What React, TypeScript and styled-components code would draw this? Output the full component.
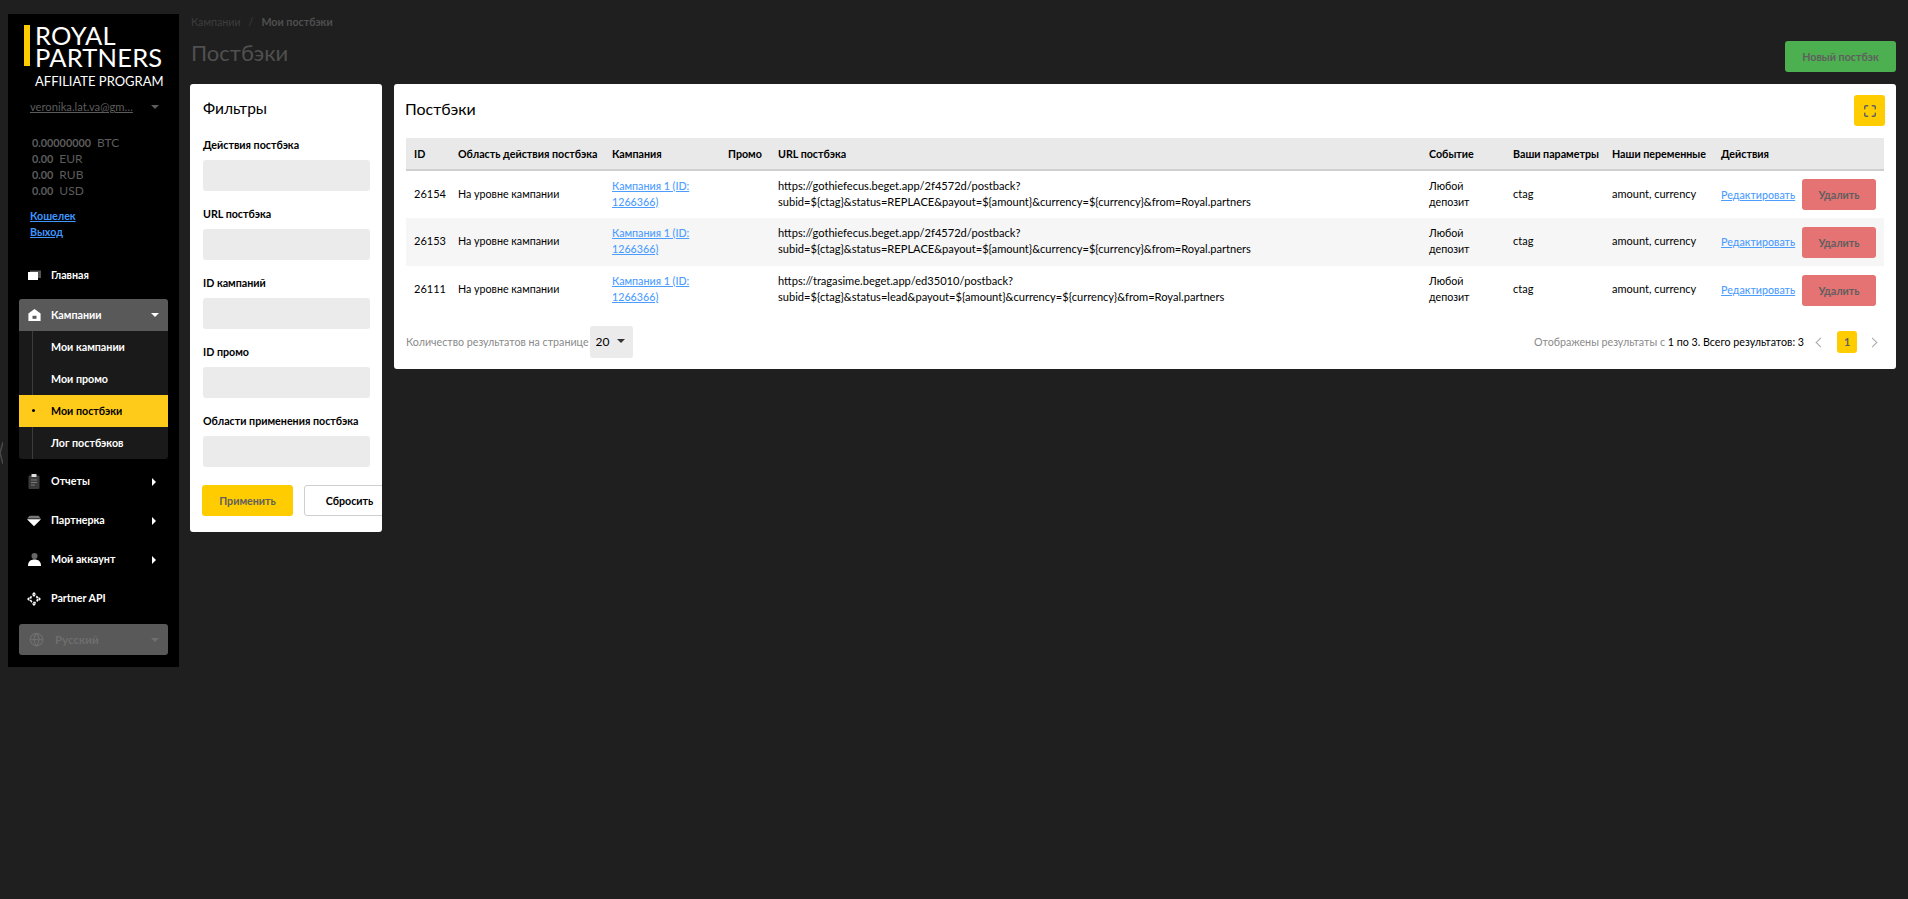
import React from "react";
import styled, { createGlobalStyle } from "styled-components";
import { Globe, Maximize } from "lucide-react";

const GlobalStyle = createGlobalStyle`
  html, body {
    margin: 0;
    padding: 0;
    background: #1f1f1f;
    height: 100%;
  }
  * {
    box-sizing: border-box;
  }
  body {
    font-family: Lato, "Noto Sans", sans-serif;
    font-size: 10.7px;
    color: #000;
  }
`;

const Page = styled("div")`
  position: relative;
  display: flex;
  align-items: flex-start;
  width: 1908px;
  height: 899px;
  overflow: hidden;
  padding: 14px 12px 0 8px;
  background: #1f1f1f;
`;

const EdgeArrow = styled("svg")`
  position: absolute;
  left: 0;
  top: 442px;
`;

const Sidebar = styled("aside")`
  width: 171px;
  height: 653px;
  flex-shrink: 0;
  background: #000;
  padding: 11px 11px 0;
  display: flex;
  flex-direction: column;
`;

const Logo = styled("div")`
  display: flex;
  flex-direction: column;
  margin-left: 5px;
  color: #fff;
`;

const LogoTop = styled("div")`
  display: flex;
  gap: 5px;
`;

const LogoBar = styled("span")`
  width: 6px;
  height: 41px;
  background: #ffcc00;
`;

const LogoName = styled("div")`
  font-size: 25.5px;
  line-height: 22px;
  letter-spacing: 0.2px;
  margin-top: -1px;
  margin-bottom: 1px;
`;

const LogoSub = styled("div")`
  font-size: 13px;
  line-height: 16px;
  margin: 4px 0 0 11px;
  white-space: nowrap;
`;

const UserRow = styled("div")`
  display: flex;
  justify-content: space-between;
  align-items: center;
  margin: 10px 0 0 11px;
  padding: 0 9px 0 0;
  color: #5c5c5c;
  font-size: 11.2px;
  line-height: 16px;
`;

const UserMail = styled("span")`
  text-decoration: underline;
`;

const Caret = styled("span")<{ $dir?: "down" | "right"; $color?: string }>`
  display: inline-block;
  width: 0;
  height: 0;
  ${(p) =>
    p.$dir === "right"
      ? `border-top: 4px solid transparent; border-bottom: 4px solid transparent; border-left: 4px solid ${p.$color || "#fff"};`
      : `border-left: 4px solid transparent; border-right: 4px solid transparent; border-top: 4px solid ${p.$color || "#fff"};`}
`;

const Balances = styled("div")`
  margin: 20px 0 0 13px;
  color: #5c5c5c;
  font-size: 12px;
  line-height: 16px;
`;

const BalanceRow = styled("div")`
  display: flex;
  align-items: baseline;
  gap: 6px;
  span:first-child {
    font-size: 10.8px;
    font-weight: 700;
  }
`;

const WalletLinks = styled("div")`
  display: flex;
  flex-direction: column;
  margin: 9px 0 0 11px;
  line-height: 16px;
  font-size: 10.7px;
  font-weight: 700;
`;

const Link = styled("a")`
  color: #3f97ff;
  text-decoration: underline;
`;

const Nav = styled("nav")`
  display: flex;
  flex-direction: column;
  margin-top: 16px;
`;

const NavRow = styled("div")`
  display: flex;
  align-items: center;
  height: 39px;
  color: #fff;
  font-size: 10.7px;
  font-weight: 700;
  padding: 0 12px 0 8px;
`;

const NavIcon = styled("span")`
  width: 14px;
  height: 14px;
  display: flex;
  align-items: center;
  justify-content: center;
  margin-right: 10px;
  svg {
    display: block;
  }
`;

const NavLabel = styled("span")`
  flex: 1;
  margin-bottom: 2px;
`;

const Group = styled("div")`
  border-radius: 3px;
  overflow: hidden;
  background: #1a1a1a;
  margin: 4px 0 3px;
`;

const GroupHead = styled(NavRow)`
  height: 32px;
  background: #595959;
  padding-right: 9px;
`;

const SubItem = styled("div")<{ $active?: boolean }>`
  position: relative;
  height: 32px;
  display: flex;
  align-items: center;
  padding: 0 0 1px 32px;
  font-size: 10.7px;
  font-weight: 700;
  color: ${(p) => (p.$active ? "#000" : "#fff")};
  background: ${(p) => (p.$active ? "#ffcb1a" : "transparent")};
  &::before {
    content: "";
    position: absolute;
    left: 13px;
    top: ${(p) => (p.$active ? "14px" : "0")};
    bottom: ${(p) => (p.$active ? "auto" : "0")};
    width: ${(p) => (p.$active ? "3px" : "1px")};
    height: ${(p) => (p.$active ? "3px" : "auto")};
    border-radius: ${(p) => (p.$active ? "50%" : "0")};
    background: ${(p) => (p.$active ? "#000" : "#3c3c3c")};
  }
`;

const LangBox = styled("div")`
  display: flex;
  align-items: center;
  height: 31px;
  margin-top: 6px;
  padding: 0 9px 0 10px;
  border-radius: 3px;
  background: #595959;
  color: #6e6e6e;
  font-size: 11.5px;
  font-weight: 700;
  gap: 11px;
`;

const LangLabel = styled("span")`
  flex: 1;
`;

const Content = styled("main")`
  flex: 1;
  padding: 0 0 0 11px;
  display: flex;
  flex-direction: column;
`;

const TopBar = styled("div")`
  display: flex;
  justify-content: space-between;
  align-items: flex-start;
  height: 70px;
`;

const Crumbs = styled("div")`
  display: flex;
  gap: 8px;
  font-size: 10.7px;
  line-height: 15px;
  color: #3d3d3d;
  padding-left: 1px;
  b {
    color: #4f4f4f;
    font-weight: 700;
  }
`;

const PageTitle = styled("h1")`
  margin: 9px 0 0 1px;
  font-size: 22px;
  line-height: 30px;
  font-weight: 400;
  color: #505050;
`;

const Button = styled("button")<{ $bg: string; $w: number; $h?: number }>`
  width: ${(p) => p.$w}px;
  height: ${(p) => p.$h ?? 31}px;
  border: 0;
  border-radius: 3px;
  background: ${(p) => p.$bg};
  color: #5f5f5f;
  font-family: inherit;
  font-size: 10.7px;
  font-weight: 700;
  padding: 0;
  flex-shrink: 0;
`;

const NewButton = styled(Button)`
  margin-top: 27px;
`;

const Columns = styled("div")`
  display: flex;
  align-items: flex-start;
  gap: 12px;
`;

const Card = styled("section")`
  background: #fff;
  border-radius: 3px;
`;

const FilterCard = styled(Card)`
  width: 192px;
  height: 448px;
  padding: 14px 0 0 13px;
  flex-shrink: 0;
  overflow: hidden;
`;

const CardTitle = styled("h2")`
  margin: 0;
  font-size: 15.5px;
  line-height: 20px;
  font-weight: 400;
  color: #000;
`;

const Field = styled("div")`
  margin-top: 16px;
  &:first-of-type {
    margin-top: 20px;
  }
`;

const FieldLabel = styled("label")`
  display: block;
  font-size: 10.7px;
  line-height: 14px;
  font-weight: 700;
  margin-bottom: 8px;
`;

const FieldInput = styled("div")`
  width: 167px;
  height: 31px;
  border-radius: 3px;
  background: #ebebeb;
`;

const FilterActions = styled("div")`
  display: flex;
  gap: 11px;
  margin-top: 18px;
  margin-left: -1px;
`;

const ResetButton = styled(Button)`
  color: #000;
  border: 1px solid #cfcfcf;
  background: #fff;
`;

const MainCard = styled(Card)`
  flex: 1;
  height: 285px;
  padding: 11px 12px 0;
`;

const MainHead = styled("div")`
  display: flex;
  justify-content: space-between;
  align-items: center;
  height: 31px;
`;

const MainTitle = styled(CardTitle)`
  margin-left: -1px;
  margin-bottom: 4px;
  font-size: 16px;
`;

const FullscreenButton = styled("button")`
  width: 31px;
  height: 31px;
  border: 0;
  margin-right: -1px;
  border-radius: 3px;
  background: #ffcc00;
  color: #5f5f5f;
  padding: 0;
  display: flex;
  align-items: center;
  justify-content: center;
`;

const Table = styled("table")`
  width: 1478px;
  margin-top: 12px;
  border-collapse: collapse;
  table-layout: fixed;
`;

const Th = styled("th")`
  height: 32px;
  padding: 0 8px 1px;
  background: #e9e9e9;
  border-bottom: 2px solid #cfcfcf;
  text-align: left;
  font-size: 10.7px;
  font-weight: 700;
  color: #000;
  white-space: nowrap;
`;

const Tr = styled("tr")<{ $odd?: boolean }>`
  height: 48px;
  background: ${(p) => (p.$odd ? "#f6f6f6" : "#fff")};
`;

const Td = styled("td")`
  padding: 0 8px 2px;
  font-size: 10.7px;
  line-height: 16px;
  color: #000;
`;

const LatinTd = styled(Td)<{ $size: number }>`
  font-size: ${(p) => p.$size}px;
`;

const TdActions = styled(Td)`
  white-space: nowrap;
  padding: 0 8px;
`;

const ActionsWrap = styled("div")`
  display: flex;
  align-items: center;
  justify-content: space-between;
`;

const TableLink = styled(Link)`
  color: #4d9dff;
  font-weight: 500;
`;

const Footer = styled("div")`
  display: flex;
  align-items: center;
  justify-content: space-between;
  margin-top: 12px;
  height: 32px;
  color: #8a8a8a;
  font-size: 10.7px;
`;

const PerPage = styled("div")`
  display: flex;
  align-items: center;
  gap: 1px;
`;

const PerPageLabel = styled("span")`
  margin-bottom: 2px;
`;

const PerPageSelect = styled("div")`
  display: flex;
  align-items: center;
  justify-content: space-between;
  width: 43px;
  height: 32px;
  padding: 0 8px 2px 6px;
  border-radius: 3px;
  background: #ebebeb;
  color: #000;
  font-size: 12px;
`;

const Pager = styled("div")`
  display: flex;
  align-items: center;
`;

const PagerText = styled("span")`
  margin: 0 13px 2px 0;
  b {
    font-weight: 400;
    color: #000;
  }
`;

const PageChevron = styled("span")<{ $last?: boolean }>`
  width: 7px;
  height: 7px;
  border-left: 1.5px solid #a8a8a8;
  border-bottom: 1.5px solid #a8a8a8;
  transform: rotate(${(p) => (p.$last ? "225deg" : "45deg")});
  margin: ${(p) => (p.$last ? "0 8px 0 12px" : "0 13px 0 0")};
`;

const PageNum = styled("span")`
  width: 20px;
  height: 22px;
  border-radius: 3px;
  background: #ffcc00;
  color: #5f5f5f;
  font-weight: 700;
  text-align: center;
  line-height: 22px;
`;

const HomeIcon = () => (
  <svg width="13" height="11" viewBox="0 0 13 11">
    <rect x="0" y="2" width="10" height="8" fill="#fff" />
    <path d="M2 2V0.6h11V8h-3V2z" fill="#555" />
  </svg>
);

const CampaignIcon = () => (
  <svg width="13" height="12" viewBox="0 0 13 12">
    <path d="M6.5 0 12.6 4.4V12H.4V4.4z" fill="#fff" />
    <rect x="4.500" y="6.800" width="4" height="3" fill="#595959" />
  </svg>
);

const ReportIcon = () => (
  <svg width="12" height="15" viewBox="0 0 12 15">
    <rect x="0.500" y="1.500" width="11" height="13.500" rx="1" fill="#3a3a3a" />
    <rect x="3.500" y="0" width="5" height="3" fill="#ddd" />
    <path d="M3 6h6M3 8.500h6M3 11h4" stroke="#777" strokeWidth="1" />
  </svg>
);

const PartnerIcon = () => (
  <svg width="16" height="12" viewBox="0 0 16 12">
    <path d="M3 0h10l3 3H0z" fill="#777" />
    <path d="M0 4h16l-8 8z" fill="#fff" />
  </svg>
);

const AccountIcon = () => (
  <svg width="13" height="13" viewBox="0 0 13 13">
    <circle cx="6.500" cy="3" r="3" fill="#666" />
    <path d="M0 13c0-4.400 2.600-6.400 6.500-6.400S13 8.600 13 13z" fill="#fff" />
  </svg>
);

const ApiIcon = () => (
  <svg width="14" height="14" viewBox="0 0 14 14" fill="#fff">
    <path d="M7 0 9.300 2.400H4.700zM7 14 4.700 11.600H9.300zM0 7 2.400 4.700V9.300zM14 7 11.600 9.300V4.700z" />
    <circle cx="7" cy="7" r="3.600" fill="none" stroke="#fff" strokeWidth="1.700" strokeDasharray="2.500 1.300" />
  </svg>
);

const rows = [
  {
    id: "26154",
    urlHead: "https://gothiefecus.beget.app/2f4572d/postback?",
    urlTail:
      "subid=${ctag}&status=REPLACE&payout=${amount}&currency=${currency}&from=Royal.partners",
  },
  {
    id: "26153",
    urlHead: "https://gothiefecus.beget.app/2f4572d/postback?",
    urlTail:
      "subid=${ctag}&status=REPLACE&payout=${amount}&currency=${currency}&from=Royal.partners",
  },
  {
    id: "26111",
    urlHead: "https://tragasime.beget.app/ed35010/postback?",
    urlTail:
      "subid=${ctag}&status=lead&payout=${amount}&currency=${currency}&from=Royal.partners",
  },
];

const filters = [
  "Действия постбэка",
  "URL постбэка",
  "ID кампаний",
  "ID промо",
  "Области применения постбэка",
];

const App: React.FC = () => {
  return (
    <Page>
      <GlobalStyle />
      <EdgeArrow width="3" height="22" viewBox="0 0 3 22">
        <path d="M3 0 0 11l3 11" fill="none" stroke="#4a4a4a" strokeWidth="1.500" />
      </EdgeArrow>
      <Sidebar>
        <Logo>
          <LogoTop>
            <LogoBar />
            <LogoName>
              ROYAL
              <br />
              PARTNERS
            </LogoName>
          </LogoTop>
          <LogoSub>AFFILIATE PROGRAM</LogoSub>
        </Logo>
        <UserRow>
          <UserMail>veronika.lat.va@gm…</UserMail>
          <Caret $color="#5c5c5c" />
        </UserRow>
        <Balances>
          <BalanceRow>
            <span>0.00000000</span>
            <span>BTC</span>
          </BalanceRow>
          <BalanceRow>
            <span>0.00</span>
            <span>EUR</span>
          </BalanceRow>
          <BalanceRow>
            <span>0.00</span>
            <span>RUB</span>
          </BalanceRow>
          <BalanceRow>
            <span>0.00</span>
            <span>USD</span>
          </BalanceRow>
        </Balances>
        <WalletLinks>
          <Link>Кошелек</Link>
          <Link>Выход</Link>
        </WalletLinks>
        <Nav>
          <NavRow>
            <NavIcon>
              <HomeIcon />
            </NavIcon>
            <NavLabel>Главная</NavLabel>
          </NavRow>
          <Group>
            <GroupHead>
              <NavIcon>
                <CampaignIcon />
              </NavIcon>
              <NavLabel>Кампании</NavLabel>
              <Caret />
            </GroupHead>
            <SubItem>Мои кампании</SubItem>
            <SubItem>Мои промо</SubItem>
            <SubItem $active>Мои постбэки</SubItem>
            <SubItem>Лог постбэков</SubItem>
          </Group>
          <NavRow>
            <NavIcon>
              <ReportIcon />
            </NavIcon>
            <NavLabel>Отчеты</NavLabel>
            <Caret $dir="right" />
          </NavRow>
          <NavRow>
            <NavIcon>
              <PartnerIcon />
            </NavIcon>
            <NavLabel>Партнерка</NavLabel>
            <Caret $dir="right" />
          </NavRow>
          <NavRow>
            <NavIcon>
              <AccountIcon />
            </NavIcon>
            <NavLabel>Мой аккаунт</NavLabel>
            <Caret $dir="right" />
          </NavRow>
          <NavRow>
            <NavIcon>
              <ApiIcon />
            </NavIcon>
            <NavLabel>Partner API</NavLabel>
          </NavRow>
          <LangBox>
            <Globe size={15} color="#6e6e6e" />
            <LangLabel>Русский</LangLabel>
            <Caret $color="#6e6e6e" />
          </LangBox>
        </Nav>
      </Sidebar>
      <Content>
        <TopBar>
          <div>
            <Crumbs>
              <span>Кампании</span>
              <span>/</span>
              <b>Мои постбэки</b>
            </Crumbs>
            <PageTitle>Постбэки</PageTitle>
          </div>
          <NewButton $bg="#4caf50" $w={111}>
            Новый постбэк
          </NewButton>
        </TopBar>
        <Columns>
          <FilterCard>
            <CardTitle>Фильтры</CardTitle>
            {filters.map((label) => (
              <Field key={label}>
                <FieldLabel>{label}</FieldLabel>
                <FieldInput />
              </Field>
            ))}
            <FilterActions>
              <Button $bg="#ffcc00" $w={91}>
                Применить
              </Button>
              <ResetButton $bg="#fff" $w={91}>
                Сбросить
              </ResetButton>
            </FilterActions>
          </FilterCard>
          <MainCard>
            <MainHead>
              <MainTitle>Постбэки</MainTitle>
              <FullscreenButton>
                <Maximize size={14} strokeWidth={2.5} />
              </FullscreenButton>
            </MainHead>
            <Table>
              <colgroup>
                <col style={{ width: 44 }} />
                <col style={{ width: 154 }} />
                <col style={{ width: 116 }} />
                <col style={{ width: 50 }} />
                <col style={{ width: 651 }} />
                <col style={{ width: 84 }} />
                <col style={{ width: 99 }} />
                <col style={{ width: 109 }} />
                <col style={{ width: 171 }} />
              </colgroup>
              <thead>
                <tr>
                  <Th>ID</Th>
                  <Th>Область действия постбэка</Th>
                  <Th>Кампания</Th>
                  <Th>Промо</Th>
                  <Th>URL постбэка</Th>
                  <Th>Событие</Th>
                  <Th>Ваши параметры</Th>
                  <Th>Наши переменные</Th>
                  <Th>Действия</Th>
                </tr>
              </thead>
              <tbody>
                {rows.map((row, index) => (
                  <Tr key={row.id} $odd={index % 2 === 1}>
                    <LatinTd $size={11}>{row.id}</LatinTd>
                    <Td>На уровне кампании</Td>
                    <Td>
                      <TableLink>Кампания 1 (ID: 1266366)</TableLink>
                    </Td>
                    <Td />
                    <LatinTd $size={11.1}>
                      {row.urlHead}
                      <br />
                      {row.urlTail}
                    </LatinTd>
                    <Td>Любой депозит</Td>
                    <LatinTd $size={11}>ctag</LatinTd>
                    <LatinTd $size={11}>amount, currency</LatinTd>
                    <TdActions>
                      <ActionsWrap>
                        <TableLink>Редактировать</TableLink>
                        <Button $bg="#e57373" $w={74}>
                          Удалить
                        </Button>
                      </ActionsWrap>
                    </TdActions>
                  </Tr>
                ))}
              </tbody>
            </Table>
            <Footer>
              <PerPage>
                <PerPageLabel>Количество результатов на странице</PerPageLabel>
                <PerPageSelect>
                  20
                  <Caret $color="#333" />
                </PerPageSelect>
              </PerPage>
              <Pager>
                <PagerText>
                  Отображены результаты с <b>1 по 3. Всего результатов: 3</b>
                </PagerText>
                <PageChevron />
                <PageNum>1</PageNum>
                <PageChevron $last />
              </Pager>
            </Footer>
          </MainCard>
        </Columns>
      </Content>
    </Page>
  );
};

export default App;
